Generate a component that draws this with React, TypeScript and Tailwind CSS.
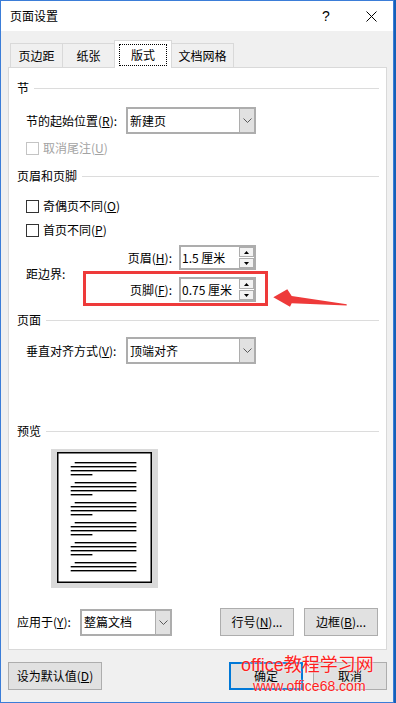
import React from "react"

// page-setup dialog, "版式" tab

function Header({ title }: { title: string }) {
  return (
    <div className="flex items-center h-[16px] pl-[8px] pr-[7px]">
      <span className="text-[12px] leading-[16px]">{title}</span>
      <div className="flex-1 h-px bg-[#dcdcdc] ml-[5px]" />
    </div>
  )
}

function Chevron() {
  return (
    <svg width="9" height="5" viewBox="0 0 9 5">
      <path d="M0.5 0.5 L4.5 4.5 L8.5 0.5" fill="none" stroke="#5a5a5a" strokeWidth="1" />
    </svg>
  )
}

function Combo({ value, className }: { value: string; className: string }) {
  return (
    <div className={`flex h-[27px] border-2 border-[#adadad] bg-white ${className}`}>
      <div className="flex-1 flex items-center pl-[2px] text-[12px] leading-[16px]">{value}</div>
      <div className="w-[15px] flex items-center justify-center bg-[#e1e1e1] border-l border-[#adadad]">
        <Chevron />
      </div>
    </div>
  )
}

function Spin({ value }: { value: string }) {
  return (
    <div className="flex h-[25px] w-[77px] border-2 border-[#adadad] bg-white">
      <div className="flex-1 flex items-center pl-[1px] text-[12px] leading-[16px]">{value}</div>
      <div className="w-[15px] flex flex-col gap-px">
        <div className="flex-1 flex items-center justify-center border border-[#adadad] bg-[#f3f3f3]">
          <svg width="5" height="3" viewBox="0 0 5 3">
            <polygon points="2.5,0 5,3 0,3" fill="#000" />
          </svg>
        </div>
        <div className="flex-1 flex items-center justify-center border border-[#adadad] bg-[#f3f3f3]">
          <svg width="5" height="3" viewBox="0 0 5 3">
            <polygon points="0,0 5,0 2.5,3" fill="#000" />
          </svg>
        </div>
      </div>
    </div>
  )
}

function Check({ label, disabled }: { label: React.ReactNode; disabled?: boolean }) {
  return (
    <div className="flex items-center h-[16px] pl-[17px]">
      <div
        className={`w-[13px] h-[13px] border bg-white ${disabled ? "border-[#c4c4c4]" : "border-[#333333]"}`}
      />
      <span className={`ml-[4px] text-[12px] leading-[16px] ${disabled ? "text-[#a3a3a3]" : "text-black"}`}>
        {label}
      </span>
    </div>
  )
}

function Btn({ children, className }: { children: React.ReactNode; className: string }) {
  return (
    <div
      className={`h-[28px] flex items-center justify-center bg-[#e1e1e1] text-[12px] leading-[16px] ${className}`}
    >
      {children}
    </div>
  )
}

const tabs = ["页边距", "纸张", "版式", "文档网格"]
const tabWidths = ["w-[53px]", "w-[53px]", "w-[58px]", "w-[63px]"]

function Preview() {
  const groups = [10, 30, 50, 70, 90, 110]
  return (
    <div className="ml-[42px] w-[107px] h-[139px] bg-[#dadada] pl-[6px] pt-[3px]">
      <svg width="95" height="131" viewBox="0 0 95 131">
        <rect x="0.75" y="0.75" width="93.5" height="129.5" fill="#fff" stroke="#000" strokeWidth="1.5" />
        {groups.map((y, i) => (
          <g key={i} fill="#000">
            <rect x="17.7" y={y} width="61.7" height="1.4" />
            <rect x="13.7" y={y + 4} width="65.7" height="1.4" />
            <rect x="13.7" y={y + 8} width="65.7" height="1.4" />
            {i < 5 && <rect x="13.7" y={y + 12} width="21.7" height="1.4" />}
          </g>
        ))}
      </svg>
    </div>
  )
}

export default function App() {
  return (
    <div className="relative w-[396px] h-[703px] flex bg-[#1560b8] font-['Noto_Sans_CJK_SC','Noto_Sans',sans-serif] text-black">
      <div className="w-[394px] h-[703px] border border-[#3b7dd8] flex flex-col bg-[#f0f0f0]">
        {/* title bar */}
        <div className="h-[30px] bg-white flex items-center pl-[9px]">
          <span className="text-[12px] leading-[16px]">页面设置</span>
          <div className="flex-1" />
          <div className="w-[30px] flex justify-center text-[14px] leading-[16px] font-['Liberation_Sans',sans-serif]">
            ?
          </div>
          <div className="w-[8px]" />
          <div className="w-[44px] flex justify-center">
            <svg width="11" height="11" viewBox="0 0 11 11">
              <path d="M0.5 0.5 L10.5 10.5 M10.5 0.5 L0.5 10.5" stroke="#000" strokeWidth="1" />
            </svg>
          </div>
        </div>

        {/* tabs */}
        <div className="flex items-end pt-[9px] pl-[9px]">
          {tabs.map((t, i) =>
            i === 2 ? (
              <div
                key={t}
                className={`relative z-10 -ml-px -mb-px h-[28px] ${tabWidths[i]} bg-white border border-b-0 border-[#d9d9d9] px-[4px] pt-[3px] pb-[2px] flex`}
              >
                <div className="flex-1 border border-dotted border-black flex items-center justify-center text-[12px] leading-[16px]">
                  {t}
                </div>
              </div>
            ) : (
              <div
                key={t}
                className={`h-[24px] ${tabWidths[i]} ${i > 0 ? "-ml-px" : ""} bg-[#f0f0f0] border border-b-0 border-[#d9d9d9] flex items-center justify-center text-[12px] leading-[16px]`}
              >
                {t}
              </div>
            )
          )}
        </div>

        {/* panel */}
        <div className="ml-[7px] w-[379px] h-[583px] bg-white border border-[#d9d9d9] flex flex-col">
          <div className="mt-[12px]">
            <Header title="节" />
          </div>
          <div className="mt-[11px] flex items-center pl-[17px]">
            <span className="w-[100px] text-[12px] leading-[16px]">
              节的起始位置(<u>R</u>):
            </span>
            <Combo value="新建页" className="w-[130px]" />
          </div>
          <div className="mt-[6px]">
            <Check label={<>取消尾注(<u>U</u>)</>} disabled />
          </div>

          <div className="mt-[12px]">
            <Header title="页眉和页脚" />
          </div>
          <div className="mt-[14px]">
            <Check label={<>奇偶页不同(<u>O</u>)</>} />
          </div>
          <div className="mt-[8px]">
            <Check label={<>首页不同(<u>P</u>)</>} />
          </div>

          <div className="mt-[7px] flex items-center pl-[17px]">
            <span className="w-[58px] text-[12px] leading-[16px]">距边界:</span>
            <div className="w-[172px] flex flex-col gap-[7px]">
              <div className="flex items-center justify-end">
                <span className="mr-[7px] text-[12px] leading-[16px]">
                  页眉(<u>H</u>):
                </span>
                <Spin value="1.5 厘米" />
              </div>
              <div className="relative flex items-center justify-end">
                <span className="mr-[7px] text-[12px] leading-[16px]">
                  页脚(<u>F</u>):
                </span>
                <Spin value="0.75 厘米" />
                <div className="absolute left-[-1px] top-[-6px] right-[-12px] bottom-[-4px] border-[3px] border-[#ee3a3a]" />
              </div>
            </div>
          </div>

          <div className="mt-[10px]">
            <Header title="页面" />
          </div>
          <div className="mt-[9px] flex items-center pl-[17px]">
            <span className="w-[100px] text-[12px] leading-[16px]">
              垂直对齐方式(<u>V</u>):
            </span>
            <Combo value="顶端对齐" className="w-[130px]" />
          </div>

          <div className="mt-[59px]">
            <Header title="预览" />
          </div>
          <div className="mt-[10px]">
            <Preview />
          </div>

          <div className="mt-[20px] h-[28px] flex items-center pl-[8px] pr-[8px]">
            <span className="w-[63px] text-[12px] leading-[16px]">
              应用于(<u>Y</u>):
            </span>
            <Combo value="整篇文档" className="w-[92px]" />
            <div className="ml-auto flex gap-[10px]">
              <Btn className="w-[74px] border border-[#adadad]">
                <span>
                  行号(<u>N</u>)...
                </span>
              </Btn>
              <Btn className="w-[74px] border border-[#adadad]">
                <span>
                  边框(<u>B</u>)...
                </span>
              </Btn>
            </div>
          </div>
        </div>

        {/* dialog buttons */}
        <div className="mt-[12px] flex pl-[7px] pr-[6px]">
          <Btn className="w-[94px] border border-[#adadad]">
            <span>
              设为默认值(<u>D</u>)
            </span>
          </Btn>
          <div className="ml-auto flex gap-[10px]">
            <Btn className="w-[74px] border-2 border-[#0078d7]">确定</Btn>
            <Btn className="w-[74px] border border-[#adadad]">取消</Btn>
          </div>
        </div>
      </div>

      {/* annotation arrow */}
      <svg className="absolute left-[270px] top-[286px]" width="80" height="24" viewBox="0 0 80 24">
        <polygon
          points="3.3,11.3 17.3,3.3 21.7,10 76.7,18.3 76.7,19.5 21.7,17.3 20,20.7"
          fill="#ee3a3a"
        />
      </svg>

      {/* watermark */}
      <div className="absolute left-[241px] top-[654px] text-[18px] leading-[22px] text-[#ff1f1f] font-['Liberation_Sans','Noto_Sans_CJK_SC',sans-serif] [text-shadow:0_0_2px_#fff]">
        office教程学习网
      </div>
      <div className="absolute left-[253px] top-[678px] text-[14px] leading-[16px] text-[#ff1f1f] font-['Liberation_Sans',sans-serif] [text-shadow:0_0_2px_#fff]">
        www.office68.com
      </div>
    </div>
  )
}
